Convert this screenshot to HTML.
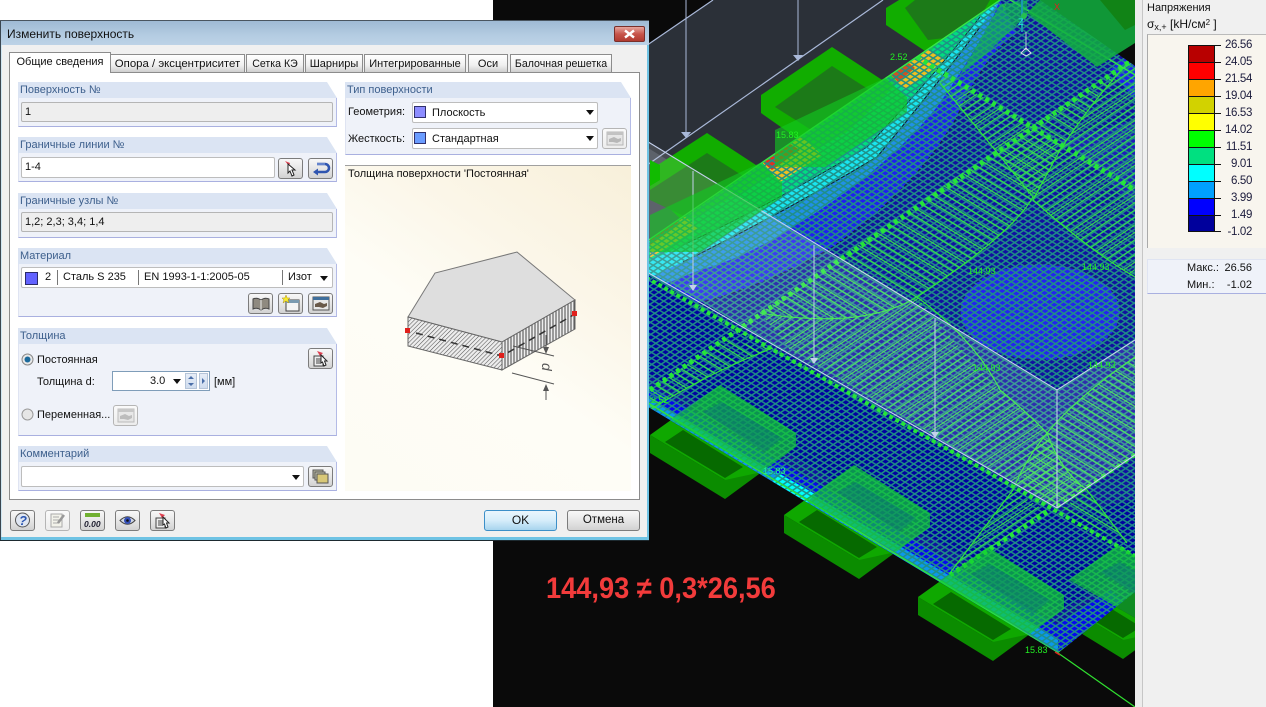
<!DOCTYPE html>
<html lang="ru"><head><meta charset="utf-8"><title>Изменить поверхность</title>
<style>
html,body{margin:0;padding:0;background:#fff}
#r{position:relative;width:1266px;height:707px;overflow:hidden;background:#fff;font:11px/13px "Liberation Sans",sans-serif;color:#111}
#r div,#r svg.a{position:absolute}
.t{white-space:nowrap}
.gh{background:#dbe4f3;color:#3d5f8c;font-size:11px;line-height:16px;padding-left:2px;box-sizing:border-box;clip-path:polygon(0 0,calc(100% - 10px) 0,100% 100%,0 100%)}
.gb{background:#eff2f9;border-right:1px solid #b4bbe6;border-bottom:1px solid #a9b0e0;border-left:1px solid #dfe4f2;box-sizing:border-box}
.ro{background:#eee;border:1px solid #b5b5b5;border-radius:2px;box-sizing:border-box;padding:3px 3px;line-height:13px}
.in{background:#fff;border:1px solid #bdbdbd;border-radius:2px;box-sizing:border-box;line-height:13px}
.b{background:linear-gradient(#f8f8f8,#e6e6e6 50%,#d2d2d2);border:1px solid #7c7c7c;border-radius:3px;box-sizing:border-box}
.bd{border-color:#b5b5b5;background:linear-gradient(#fafafa,#ededed)}
.tab{background:linear-gradient(#fff,#f0f0f0 60%,#cfcfcf);border:1px solid #8c8c8c;border-bottom:0;box-sizing:border-box;text-align:center;line-height:18px;height:18px;top:54px;white-space:nowrap}
.arr{width:0;height:0;border:4px solid transparent;border-top:5px solid #111;border-bottom:0}
.lg{left:1200px;width:52px;text-align:right;font-size:11.5px;letter-spacing:-.35px;line-height:14px;color:#1c1c3c}
svg text{font-family:"Liberation Sans",sans-serif}
</style></head><body><div id="r">

<svg class="a" style="left:0;top:0" width="1266" height="707" viewBox="0 0 1266 707">
<defs>
<pattern id="mesh" patternUnits="userSpaceOnUse" width="10" height="10" patternTransform="matrix(.46 -.31 .48 .29 0 0)"><path d="M0 0H10M0 0V10M0 10H10M10 0V10" stroke="#1f8f86" stroke-width="2.900" fill="none"/></pattern>
<pattern id="hA" patternUnits="userSpaceOnUse" width="10" height="10" patternTransform="matrix(.62 -.42 .85 .52 0 0)"><path d="M0 0V10M10 0V10" stroke="#36e24a" stroke-width="1.800" fill="none"/></pattern>
<pattern id="hB" patternUnits="userSpaceOnUse" width="10" height="10" patternTransform="matrix(.85 -.58 .58 .35 0 0)"><path d="M0 0H10M0 10H10" stroke="#36e24a" stroke-width="1.800" fill="none"/></pattern>
<pattern id="hL" patternUnits="userSpaceOnUse" width="3" height="3" patternTransform="rotate(45)"><path d="M0 0V3" stroke="#555" stroke-width="1.100"/></pattern>
<pattern id="hV" patternUnits="userSpaceOnUse" width="3" height="3"><path d="M1 0V3" stroke="#555" stroke-width="1.100"/></pattern>
<clipPath id="pl"><polygon points="520,330 1000,0 1040,0 1135,66 1135,592 1058,653 650,408"/></clipPath>
<clipPath id="sc"><rect x="493" y="0" width="642" height="707"/></clipPath>
<g id="bl">
<polygon points="650,435 725,480 796,433 796,447 725,499 650,453" fill="#0b8c00"/>
<polygon points="650,435 671,420 762,472 725,480" fill="#0fa800"/>
<polygon points="665,442 683,430 743,467 725,478" fill="#066a00"/>
</g>
<g id="bu">
<polygon points="720,385 796,433 796,447 762,472 671,420" fill="#12d030" fill-opacity=".66"/>
<polygon points="720,385 796,433 770,451 695,402" fill="#14d830" fill-opacity=".12"/>
<polygon points="703,412 722,402 782,438 765,452" fill="#0a6a80" fill-opacity=".4"/>
</g>
</defs>
<rect x="493" width="642" height="707" fill="#0a0a0a"/>
<g clip-path="url(#sc)">
<polygon points="713,0 1005,0 640,255 640,50" fill="#2b3038"/>
<polygon points="640,143 700,180 720,240 640,290" fill="#454b55"/>
<path d="M640 50L713 0M640 170L883 0" stroke="#a9b8d8" stroke-width="1.200" fill="none"/>
<path d="M686 0V132M798 0V55" stroke="#a9b8d8" stroke-width="1" fill="none"/>
<path d="M681 132h10l-5 6zM793 55h10l-5 6z" fill="#a9b8d8"/>
<polygon points="761,95 832,47 908,97 908,112 835,165 761,113" fill="#11ad00"/>
<polygon points="775,107 832,66 890,103 835,145" fill="#1c7a18"/>
<polygon points="650,170 707,133 782,182 782,197 703,240 650,190" fill="#11ad00"/>
<polygon points="650,190 707,153 765,190 703,225 650,200" fill="#1c7a18"/>
<polygon points="886,8 899,0 1020,0 1000,30 928,53 886,25" fill="#11ad00"/>
<polygon points="905,8 915,0 990,0 970,35 928,40" fill="#1c7a18"/>
<use href="#bl"/><use href="#bl" x="134" y="80"/><use href="#bl" x="268" y="162"/><use href="#bl" x="398" y="160"/>
<g clip-path="url(#pl)">
<rect x="500" width="640" height="707" fill="#1010a0"/>
<path d="M520 330L650 240L1000 0L1017 33Q983 57 957 117Q917 187 833 247Q740 300 660 310L600 325Z" fill="#1e1ef0"/>
<path d="M520 330L1000 0L993 17Q970 60 937 107Q883 173 793 227Q745 258 700 270L600 310Z" fill="#2090e8"/>
<path d="M520 330L1000 0L980 27Q933 90 877 157Q783 213 683 262L600 300Z" fill="#19e6f0"/>
<path d="M520 330L1000 0L980 17Q933 77 867 147Q767 207 683 245L600 285Z" fill="#00de80"/>
<path d="M600 270L1000 0L975 10Q920 60 850 130Q750 190 660 235Z" fill="#10cc50"/>
<polygon points="650,232 680,212 698,228 650,258" fill="#f0c020"/>
<polygon points="760,160 800,135 822,155 780,182" fill="#f0c020"/>
<polygon points="760,160 787,142 800,150 772,170" fill="#e23020"/>
<polygon points="888,72 925,48 945,60 905,90" fill="#f0c020"/>
<polygon points="888,72 905,60 915,68 898,82" fill="#d05020"/>
<polygon points="650,232 670,218 680,224 650,245" fill="#e23020"/>
<path d="M660 310Q740 300 833 247Q917 187 957 117Q983 57 1017 33" fill="none" stroke="#141450" stroke-width="1.200" stroke-dasharray="6 3"/>
<path d="M683 262Q783 213 877 157Q933 90 980 27" fill="none" stroke="#102030" stroke-width="1.200"/>
<path d="M683 245Q767 207 867 147Q933 77 980 17" fill="none" stroke="#102030" stroke-width="1"/>
<ellipse cx="1040" cy="312" rx="80" ry="48" fill="#2323f0" stroke="#1b1b70" stroke-width="1.200" stroke-dasharray="5 3"/>
<path d="M1135 210L1100 170 1060 140 1135 120Z" fill="#1e1eb8"/>
<path d="M1110 70L1135 50V100Z" fill="#1e1ef0"/>
<polygon points="640,380 1058,625 1110,590 1135,610 1135,650 1058,660 640,410" fill="#0606ef"/>
<polygon points="640,392 1058,640 1058,660 640,410" fill="#0a98ec"/>
<polygon points="780,474 815,494 805,505 770,485" fill="#0ff"/>
<polygon points="640,368 1060,612 1135,565 1135,500 1060,515 640,270" fill="#0000a0"/>
<rect x="500" width="640" height="707" fill="url(#mesh)"/>
<path d="M760 313L1027 128 1033 197Q1013 233 917 297Q863 330 760 313Z" fill="url(#hA)"/>
<path d="M650 390L723 340 773 348Q710 372 650 410Z" fill="url(#hA)"/>
<path d="M917 57L1135 190V277Q1093 253 1033 200Q993 147 940 83Z" fill="url(#hB)"/>
<path d="M1027 128L1133 60Q1093 100 1060 150L1033 200Z" fill="url(#hA)"/>
<path d="M1135 60V190L1060 150Q1093 100 1133 57Z" fill="url(#hB)"/>
<path d="M790 350L760 313Q863 330 917 297 960 350 1000 390 1030 415 1047 433 1057 463 1057 508Z" fill="url(#hB)"/>
<path d="M1135 357Q1077 397 1047 433 1030 460 1020 483L1057 508 1135 455Z" fill="url(#hA)"/>
<path d="M1047 433Q1060 470 1087 490L1057 508 1013 490Q1025 460 1047 433Z" fill="url(#hB)"/>
<path d="M1013 490L1047 512 950 573Q985 530 1013 490Z" fill="url(#hB)"/>
<path d="M1087 490L1127 543 1060 510Z" fill="url(#hA)"/>
<g fill="none" stroke="#2fe63c" stroke-width="1.200">
<path d="M760 313Q863 330 917 297Q1013 233 1033 197Q993 147 940 83"/>
<path d="M1135 277Q1093 253 1033 200M1133 57Q1093 100 1060 150L1033 200"/>
<path d="M917 297Q975 340 1000 390Q1030 415 1047 433Q1060 470 1087 490L1127 543"/>
<path d="M1135 357Q1077 397 1047 433Q1025 460 1013 490L950 573"/>
<path d="M650 410Q710 372 773 348"/>
<path d="M640 398L1058 653L1135 597" stroke-width="1.400"/>
</g>
<g fill="none" stroke="#25e43a">
<path d="M650 390L1135 58" stroke-width="5" stroke-dasharray="4 4"/>
<path d="M917 57L1135 190" stroke-width="5" stroke-dasharray="4 4"/>
<path d="M640 274L1135 556" stroke-width="4" stroke-dasharray="4 3"/>
<path d="M1047 512L950 575" stroke-width="5" stroke-dasharray="4 4"/>
<path d="M1057 507L1135 455" stroke-width="4" stroke-dasharray="4 5"/>
</g>
</g>
<path d="M640 246L1000 0" stroke="#34ea44" stroke-width="1.400"/>
<path d="M1010 0L1135 75" stroke="#34ea44" stroke-width="1.200"/>
<polygon points="640,137 1057,390 1057,508 640,266" fill="#fff" fill-opacity=".13"/>
<polygon points="1057,390 1135,340 1135,455 1057,508" fill="#fff" fill-opacity=".13"/>
<path d="M640 137L1057 390L1135 340M1057 390V508M640 268L1057 508L1135 455" stroke="#c4d0ec" stroke-width="1.100" fill="none"/>
<path d="M693 171V285M814 245V358M935 318V432" stroke="#c4d0ec" stroke-width="1" fill="none"/>
<path d="M689 285h8l-4 6zM810 358h8l-4 6zM931 432h8l-4 6z" fill="#c4d0ec"/>
<polygon points="885,78 907,97 907,112 825,167 775,167 775,130" fill="#12c820" fill-opacity=".62"/>
<polygon points="760,163 782,182 782,197 700,252 650,252 650,215" fill="#12c820" fill-opacity=".62"/>
<polygon points="650,160 660,165 660,180 650,186" fill="#11bb00"/>
<polygon points="1027,13 1097,67 1135,43 1135,0 1040,0" fill="#12b040" fill-opacity=".85"/>
<polygon points="1000,5 1027,0 1027,15 985,55 960,75" fill="#12c050" fill-opacity=".65"/>
<polygon points="1100,0 1135,0 1135,25 1125,30" fill="#127f10" fill-opacity=".85"/>
<use href="#bu"/><use href="#bu" x="134" y="80"/><use href="#bu" x="268" y="162"/><use href="#bu" x="398" y="160"/>
<path d="M1058 653L1135 707" stroke="#30e030" stroke-width="1.200"/>
<path d="M1055 652l5 3" stroke="#e02020" stroke-width="1.400"/>
<path d="M1022 0V32" stroke="#1a9ab0" stroke-width="2"/><path d="M1026 32V50" stroke="#b8c8e0"/>
<polygon points="1026,48 1031,53 1026,56 1021,53" fill="none" stroke="#dde" stroke-width="1"/>
<circle cx="1024" cy="16" r="3" fill="#25c050"/>
<g font-size="9">
<text x="1001" y="10" fill="#20c840">Y</text><text x="1054" y="10" fill="#e02020">X</text><text x="1018" y="25" fill="#20e8e0">Z</text>
<g fill="#22f022"><text x="890" y="60">2.52</text><text x="776" y="138">15.83</text><text x="968" y="274">144.93</text><text x="1082" y="270">144.93</text><text x="973" y="371">144.93</text><text x="1088" y="368">144.93</text><text x="1025" y="653">15.83</text><text x="763" y="474" fill="#20e8a0">15.83</text><text x="651" y="403">2.52</text></g>
</g>
</g>
</svg>

<div class="t" style="left:546px;top:573px;font:bold 30px/32px 'Liberation Sans',sans-serif;color:#f23b3b;transform:scaleX(.907);transform-origin:0 0">144,93 ≠ 0,3*26,56</div>

<div style="left:1135px;top:0;width:131px;height:707px;background:#f0f0f0"></div>
<div style="left:1135px;top:0;width:7px;height:707px;background:#ececec;border-right:1px solid #c6c6c6"></div>
<div class="t" style="left:1147px;top:2px">Напряжения</div>
<div class="t" style="left:1147px;top:17px;font-size:12px;line-height:15px">σ<span style="font-size:9px;position:relative;top:2px">x,+</span> [kН/см<span style="font-size:8px;position:relative;top:-3px">2</span> ]</div>
<div style="left:1147px;top:34px;width:119px;height:214px;background:#f8f5ee;border-top:1px solid #bbb;border-left:1px solid #aaa;box-sizing:border-box"></div>
<div style="left:1188px;top:45px;width:27px;height:187px;background:linear-gradient(#b80000 0 9.09%,#ff0000 9.09% 18.18%,#ffa500 18.18% 27.27%,#d2d200 27.27% 36.36%,#ffff00 36.36% 45.45%,#00ff00 45.45% 54.54%,#00e080 54.54% 63.63%,#00ffff 63.63% 72.72%,#00a0ff 72.72% 81.81%,#0000ff 81.81% 90.9%,#00009c 90.9%);outline:1px solid #111;outline-offset:-1px"></div>
<svg class="a" style="left:1188px;top:45px" width="40" height="190"><path d="M0 .5H33M0 17.5H33M0 34.5H33M0 51.5H33M0 68.5H33M0 85.5H33M0 102.5H33M0 119.5H33M0 136.5H33M0 153.5H33M0 170.5H33M0 186.5H33" stroke="#111" fill="none"/></svg>
<div class="lg" style="top:38px">26.56</div><div class="lg" style="top:55px">24.05</div><div class="lg" style="top:72px">21.54</div><div class="lg" style="top:89px">19.04</div><div class="lg" style="top:106px">16.53</div><div class="lg" style="top:123px">14.02</div><div class="lg" style="top:140px">11.51</div><div class="lg" style="top:157px">9.01</div><div class="lg" style="top:174px">6.50</div><div class="lg" style="top:191px">3.99</div><div class="lg" style="top:208px">1.49</div><div class="lg" style="top:225px">-1.02</div>
<div style="left:1147px;top:259px;width:119px;height:35px;background:#eff2f9;border-top:1px solid #dfe4f2;border-bottom:1px solid #a9b0e0;border-left:1px solid #dfe4f2;box-sizing:border-box"></div>
<div class="t" style="left:1187px;top:262px">Макс.:</div><div class="t" style="left:1187px;top:279px">Мин.:</div>
<div style="left:1210px;top:262px;width:42px;text-align:right">26.56</div><div style="left:1210px;top:279px;width:42px;text-align:right">-1.02</div>

<div style="left:0;top:20px;width:649px;height:521px;background:#6fc3e4;border-top:1px solid #4a5560;box-sizing:border-box"></div>
<div style="left:0;top:21px;width:649px;height:24px;background:linear-gradient(#9fbad4,#b4cce2 60%,#bcd2e6)"></div>
<div class="t" style="left:7px;top:27px;font-size:12px;line-height:14px;color:#111">Изменить поверхность</div>
<div style="left:614px;top:26px;width:31px;height:16px;border:1px solid #7a2f2a;border-radius:2px;box-sizing:border-box;background:linear-gradient(#e6a59e,#c7554b 50%,#b03a30)"></div>
<svg class="a" style="left:622px;top:29px" width="15" height="10"><path d="M3 1.500L12 8.500M12 1.500L3 8.500" stroke="#fff" stroke-width="2.400"/></svg>
<div style="left:2px;top:45px;width:645px;height:492px;background:#f0f0f0"></div>
<div style="left:0;top:540px;width:649px;height:1px;background:#1d2a30"></div>
<div style="left:0;top:21px;width:1px;height:519px;background:#3a4650"></div>
<div style="left:1px;top:45px;width:1px;height:492px;background:#cfe6f2"></div>

<div style="left:9px;top:72px;width:631px;height:428px;background:#fff;border:1px solid #8c8c8c;box-sizing:border-box"></div>
<div class="tab" style="left:110px;width:135px;font-size:11.4px">Опора / эксцентриситет</div>
<div class="tab" style="left:246px;width:58px;font-size:10.6px">Сетка КЭ</div>
<div class="tab" style="left:305px;width:58px">Шарниры</div>
<div class="tab" style="left:364px;width:102px">Интегрированные</div>
<div class="tab" style="left:468px;width:40px">Оси</div>
<div class="tab" style="left:510px;width:102px;font-size:10.6px">Балочная решетка</div>
<div style="left:9px;top:52px;width:102px;height:21px;background:#fff;border:1px solid #8c8c8c;border-bottom:0;box-sizing:border-box;text-align:center;line-height:19px;white-space:nowrap">Общие сведения</div>

<div class="gh" style="left:18px;top:82px;width:319px;height:16px">Поверхность №</div>
<div class="gb" style="left:18px;top:98px;width:319px;height:29px"></div>
<div class="ro" style="left:21px;top:102px;width:312px;height:20px">1</div>
<div class="gh" style="left:18px;top:137px;width:319px;height:16px">Граничные линии №</div>
<div class="gb" style="left:18px;top:153px;width:319px;height:29px"></div>
<div class="in" style="left:21px;top:157px;width:254px;height:21px;padding:3px 3px">1-4</div>
<div class="b" style="left:278px;top:158px;width:25px;height:21px"></div>
<svg class="a" style="left:282px;top:160px" width="18" height="17"><path d="M3 1L8 3 7 6Z" fill="#e04050"/><path d="M6 4L13 10H10L12 15 10 16 8 11 6 13Z" fill="#fff" stroke="#222"/></svg>
<div class="b" style="left:308px;top:158px;width:25px;height:21px"></div>
<svg class="a" style="left:311px;top:161px" width="20" height="15"><path d="M6 3H14A4 4 0 0 1 14 11H4" fill="none" stroke="#2f55b0" stroke-width="2.600"/><path d="M6 3H14" stroke="#9ab4ea" stroke-width="1"/><path d="M7 7.500L2 11 7 14.500Z" fill="#2f55b0"/></svg>
<div class="gh" style="left:18px;top:193px;width:319px;height:16px">Граничные узлы №</div>
<div class="gb" style="left:18px;top:209px;width:319px;height:29px"></div>
<div class="ro" style="left:21px;top:212px;width:312px;height:20px">1,2; 2,3; 3,4; 1,4</div>
<div class="gh" style="left:18px;top:248px;width:319px;height:16px">Материал</div>
<div class="gb" style="left:18px;top:264px;width:319px;height:53px"></div>
<div class="in" style="left:21px;top:267px;width:312px;height:21px"></div>
<div style="left:25px;top:272px;width:11px;height:11px;background:#6262ff;border:1px solid #2a2a6a"></div>
<div style="left:57px;top:270px;width:1px;height:15px;background:#777"></div><div style="left:138px;top:270px;width:1px;height:15px;background:#777"></div><div style="left:282px;top:270px;width:1px;height:15px;background:#777"></div>
<div class="t" style="left:45px;top:271px">2</div><div class="t" style="left:63px;top:271px">Сталь S 235</div><div class="t" style="left:144px;top:271px">EN 1993-1-1:2005-05</div><div class="t" style="left:288px;top:271px">Изот</div>
<div class="arr" style="left:320px;top:276px"></div>
<div class="b" style="left:248px;top:293px;width:25px;height:21px"></div>
<svg class="a" style="left:252px;top:296px" width="18" height="15"><path d="M1 3Q5 1 9 4Q13 1 17 3V13Q13 11 9 14Q5 11 1 13Z" fill="#8f8a80" stroke="#444"/><path d="M9 4V14" stroke="#eee"/></svg>
<div class="b" style="left:278px;top:293px;width:25px;height:21px"></div>
<svg class="a" style="left:282px;top:295px" width="18" height="17"><rect x="4" y="5" width="13" height="11" fill="#f4f4f4" stroke="#444"/><rect x="4" y="5" width="13" height="3" fill="#7a9ab0"/><path d="M4 0L5.200 3 8 3 6 5 7 8 4 6 1 8 2 5 0 3 2.800 3Z" fill="#f6ea30" stroke="#b09010" stroke-width=".5"/></svg>
<div class="b" style="left:308px;top:293px;width:25px;height:21px"></div>
<svg class="a" style="left:312px;top:296px" width="18" height="15"><rect x="1" y="1" width="16" height="13" fill="#e8e8e8" stroke="#555"/><rect x="1" y="1" width="16" height="3" fill="#3f6f9c"/><path d="M3 8L8 6 12 8 15 7V10L11 12 7 11 3 11Z" fill="#6a5a4a"/></svg>
<div class="gh" style="left:18px;top:328px;width:319px;height:16px">Толщина</div>
<div class="gb" style="left:18px;top:344px;width:319px;height:92px"></div>
<svg class="a" style="left:20px;top:352px" width="15" height="15"><circle cx="7.500" cy="7.500" r="5.500" fill="#e8e8e8" stroke="#8a8a8a"/><circle cx="7.500" cy="7.500" r="3" fill="#1c6a9c"/></svg>
<div class="t" style="left:37px;top:354px">Постоянная</div>
<div class="b" style="left:308px;top:348px;width:25px;height:21px"></div>
<svg class="a" style="left:311px;top:350px" width="20" height="18"><rect x="3" y="6" width="9" height="10" fill="#eee" stroke="#444"/><path d="M5 9H10M5 11H10M5 13H10" stroke="#444"/><path d="M6 1L12 3 9 6Z" fill="#e04050"/><path d="M10 5L16 11H13.500L15 15 13 16 11.500 12 10 13Z" fill="#fff" stroke="#222"/></svg>
<div class="t" style="left:37px;top:376px">Толщина d:</div>
<div style="left:112px;top:371px;width:98px;height:20px;background:#fff;border:1px solid #7f9db9;box-sizing:border-box"></div>
<div class="t" style="left:150px;top:375px">3.0</div>
<div class="arr" style="left:173px;top:379px"></div>
<div style="left:185px;top:373px;width:12px;height:16px;background:linear-gradient(#e6edf7,#cfdcee);border:1px solid #b5c4d8;box-sizing:border-box"></div>
<svg class="a" style="left:186px;top:374px" width="10" height="14"><path d="M5 2L8 5H2ZM5 12L2 9H8Z" fill="#4a6ea8"/></svg>
<div style="left:199px;top:373px;width:9px;height:16px;background:linear-gradient(#e6edf7,#cfdcee);border:1px solid #b5c4d8;box-sizing:border-box"></div>
<svg class="a" style="left:200px;top:376px" width="7" height="10"><path d="M2 2L5 5 2 8Z" fill="#4a6ea8"/></svg>
<div class="t" style="left:214px;top:376px">[мм]</div>
<svg class="a" style="left:20px;top:407px" width="15" height="15"><circle cx="7.500" cy="7.500" r="5.500" fill="#e6e6e6" stroke="#9a9a9a"/></svg>
<div class="t" style="left:37px;top:409px">Переменная...</div>
<div class="b bd" style="left:113px;top:405px;width:25px;height:21px"></div>
<svg class="a" style="left:117px;top:408px" width="18" height="15" opacity=".5"><rect x="1" y="1" width="16" height="13" fill="#ddd" stroke="#888"/><rect x="1" y="1" width="16" height="3" fill="#999"/><path d="M3 8L8 6 12 8 15 7V10L11 12 7 11 3 11Z" fill="#888"/></svg>
<div class="gh" style="left:18px;top:446px;width:319px;height:16px">Комментарий</div>
<div class="gb" style="left:18px;top:462px;width:319px;height:29px"></div>
<div class="in" style="left:21px;top:466px;width:283px;height:21px"></div>
<div class="arr" style="left:292px;top:475px"></div>
<div class="b" style="left:308px;top:466px;width:25px;height:21px"></div>
<svg class="a" style="left:312px;top:469px" width="18" height="15"><rect x="1" y="1" width="10" height="8" fill="#b8b8a0" stroke="#555"/><rect x="3" y="3" width="10" height="8" fill="#c8c8b0" stroke="#555"/><rect x="5" y="5" width="11" height="9" fill="#d8c878" stroke="#555"/></svg>

<div class="gh" style="left:345px;top:82px;width:286px;height:16px;font-size:11px">Тип поверхности</div>
<div class="gb" style="left:345px;top:98px;width:286px;height:57px"></div>
<div class="t" style="left:348px;top:106px">Геометрия:</div>
<div class="in" style="left:412px;top:102px;width:186px;height:21px"></div>
<div style="left:414px;top:106px;width:12px;height:12px;background:#8c8cff;border:1px solid #30306c;box-sizing:border-box"></div>
<div class="t" style="left:432px;top:107px">Плоскость</div>
<div class="arr" style="left:586px;top:110px"></div>
<div class="t" style="left:348px;top:133px">Жесткость:</div>
<div class="in" style="left:412px;top:128px;width:186px;height:21px"></div>
<div style="left:414px;top:132px;width:12px;height:12px;background:#6a9cff;border:1px solid #30306c;box-sizing:border-box"></div>
<div class="t" style="left:432px;top:133px">Стандартная</div>
<div class="arr" style="left:586px;top:136px"></div>
<div class="b bd" style="left:602px;top:128px;width:25px;height:21px"></div>
<svg class="a" style="left:606px;top:131px" width="18" height="15" opacity=".55"><rect x="1" y="1" width="16" height="13" fill="#ddd" stroke="#888"/><rect x="1" y="1" width="16" height="3" fill="#999"/><path d="M3 8L8 6 12 8 15 7V10L11 12 7 11 3 11Z" fill="#888"/></svg>

<div style="left:345px;top:165px;width:286px;height:326px;border-top:1px solid #a0a0a0;box-sizing:border-box;background:linear-gradient(215deg,#f8f0da 0%,#fbf6e8 30%,#fefdf6 55%,#fdfcf4 100%)"></div>
<div class="t" style="left:348px;top:168px">Толщина поверхности 'Постоянная'</div>
<svg class="a" style="left:380px;top:230px" width="220" height="190" viewBox="380 230 220 190">
<polygon points="408,317 435,273 517,252 575,300 502,342" fill="#dedede" stroke="#777"/>
<polygon points="408,317 502,342 502,370 408,346" fill="#ededed"/><polygon points="408,317 502,342 502,370 408,346" fill="url(#hL)" stroke="#666"/>
<polygon points="502,342 575,300 575,329 502,370" fill="#eee"/><polygon points="502,342 575,300 575,329 502,370" fill="url(#hV)" stroke="#666"/>
<path d="M416 333L502 356L575 314" stroke="#333" stroke-width="1.500" stroke-dasharray="7 5" fill="none"/>
<rect x="405" y="328" width="5" height="5" fill="#e0201c"/><rect x="499" y="353" width="5" height="5" fill="#e0201c"/><rect x="572" y="311" width="5" height="5" fill="#e0201c"/>
<path d="M513 346L554 356M512 373L554 384M546 335V347M546 400V388" stroke="#555" fill="none"/>
<path d="M543 347h6l-3 7zM543 391h6l-3-7z" fill="#555"/>
<text x="0" y="0" font-size="14" font-style="italic" fill="#555" transform="translate(542,363) rotate(90)">d</text>
</svg>

<div class="b" style="left:10px;top:510px;width:25px;height:21px"></div>
<svg class="a" style="left:13px;top:512px" width="19" height="17"><circle cx="9.500" cy="8" r="7" fill="#dfe6f2" stroke="#555"/><text x="6" y="13" font-size="13" font-weight="bold" font-style="italic" fill="#2a55b0">?</text></svg>
<div class="b bd" style="left:45px;top:510px;width:25px;height:21px"></div>
<svg class="a" style="left:50px;top:512px" width="16" height="17"><rect x="1" y="2" width="11" height="13" fill="#f2f2ea" stroke="#aaa"/><path d="M3 5H9M3 8H9M3 11H9" stroke="#aaa"/><path d="M8 11L14 3" stroke="#999" stroke-width="2.500"/></svg>
<div class="b" style="left:80px;top:510px;width:25px;height:21px"></div>
<svg class="a" style="left:83px;top:512px" width="19" height="17"><rect x="2" y="1" width="15" height="4" fill="#70b030"/><text x="1" y="15" font-size="8.500" font-weight="bold" font-style="italic" fill="#223">0.00</text></svg>
<div class="b" style="left:115px;top:510px;width:25px;height:21px"></div>
<svg class="a" style="left:118px;top:513px" width="19" height="15"><path d="M2 7.500Q9.500 0 17 7.500Q9.500 15 2 7.500Z" fill="#cfd6e4" stroke="#444"/><circle cx="9.500" cy="7.500" r="3.500" fill="#3450b8"/><circle cx="9.500" cy="7.500" r="1.300" fill="#111"/></svg>
<div class="b" style="left:150px;top:510px;width:25px;height:21px"></div>
<svg class="a" style="left:153px;top:512px" width="20" height="18"><rect x="3" y="6" width="9" height="10" fill="#eee" stroke="#444"/><path d="M5 9H10M5 11H10M5 13H10" stroke="#444"/><path d="M6 1L12 3 9 6Z" fill="#e04050"/><path d="M10 5L16 11H13.500L15 15 13 16 11.500 12 10 13Z" fill="#fff" stroke="#222"/></svg>
<div style="left:484px;top:510px;width:73px;height:21px;border:1px solid #3c8fc8;border-radius:3px;box-sizing:border-box;background:linear-gradient(#eaf6fd,#d6edfa 50%,#a8d4ee);text-align:center;line-height:19px;font-size:12px">OK</div>
<div class="b" style="left:567px;top:510px;width:73px;height:21px;text-align:center;line-height:19px;font-size:11.500px">Отмена</div>

</div></body></html>
